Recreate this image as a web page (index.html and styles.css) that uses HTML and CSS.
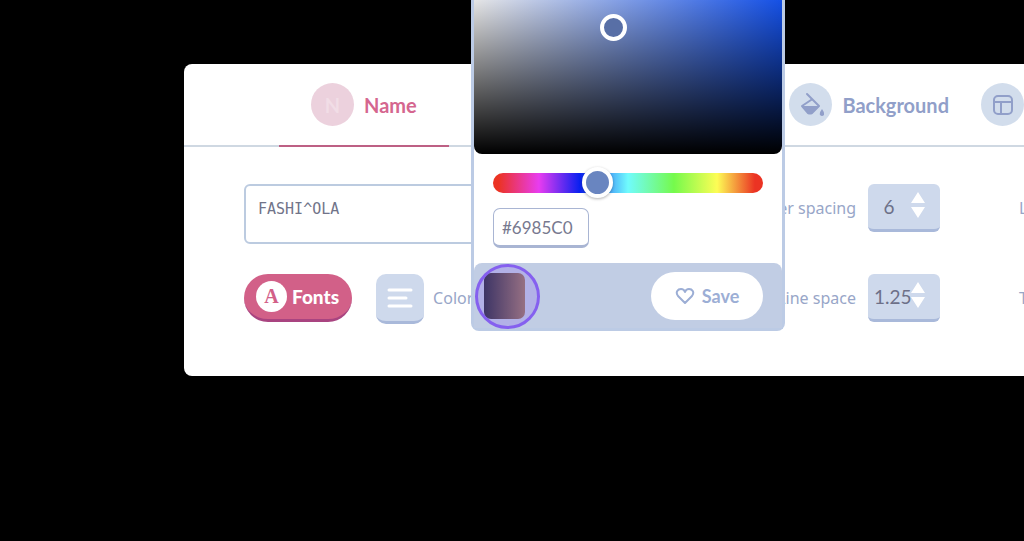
FILE: index.html
```
<!DOCTYPE html>
<html lang="en">
<head>
    <meta charset="utf-8">
    <title>Text Editor</title>
    <link rel="stylesheet" href="styles.css">
</head>
<body>
    <main class="stage">
        <section class="panel">
            <nav class="tabs">
                <a class="tab active" href="#name">
                    <span class="tab-icon letter">N</span>
                    Name
                </a>
                <a class="tab background" href="#background">
                    <span class="tab-icon">
                        <svg width="26" height="26" viewBox="0 0 26 26">
                            <path d="M9 2l4 4q1 1 0 2l-9 6 6 7q2 1 4 0l7-7-8-8" fill="none" stroke="currentColor" stroke-width="2" stroke-linecap="round" stroke-linejoin="round"/>
                            <path d="M4 14h17l-7 7q-2 1-4 0z" fill="currentColor"/>
                            <path d="M24 17q3 4 2 6-2 2-4 0-1-2 2-6z" fill="currentColor"/>
                        </svg>
                    </span>
                    Background
                </a>
                <a class="tab" href="#layout" aria-label="Layout">
                    <span class="tab-icon">
                        <svg width="22" height="22" viewBox="0 0 22 22" fill="none" stroke="currentColor" stroke-width="2">
                            <rect x="2" y="2" width="18" height="18" rx="4"/>
                            <path d="M2 8h18M9 8v12"/>
                        </svg>
                    </span>
                </a>
            </nav>

            <form class="controls">
                <textarea class="name-text" aria-label="Name" spellcheck="false">FASHI^OLA</textarea>
                <label class="label" for="letter-spacing">Letter spacing</label>
                <div class="number">
                    <input id="letter-spacing" type="number" value="6">
                    <svg class="arrows" width="14" height="28" viewBox="0 0 14 28" fill="#fff"><path d="M7 1l7 11H0zM0 16h14L7 27z"/></svg>
                </div>
                <span class="label next">L</span>

                <div class="text-tools">
                    <button type="button" class="fonts"><span class="fonts-icon">A</span>Fonts</button>
                    <button type="button" class="align" aria-label="Align">
                        <svg width="26" height="20" viewBox="0 0 26 20" fill="none" stroke="#fff" stroke-width="3" stroke-linecap="round"><path d="M2 2h22M2 10h17M2 18h22"/></svg>
                    </button>
                    <span class="label">Color</span>
                </div>
                <label class="label" for="line-space">Line space</label>
                <div class="number">
                    <input id="line-space" type="number" step="0.05" value="1.25">
                    <svg class="arrows" width="14" height="28" viewBox="0 0 14 28" fill="#fff"><path d="M7 1l7 11H0zM0 16h14L7 27z"/></svg>
                </div>
                <span class="label next">T</span>
            </form>
        </section>

        <!-- Color picker opens over the panel -->
        <aside class="picker">
            <div class="shade"><span class="shade-handle"></span></div>
            <div class="picker-body">
                <input class="hue" type="range" min="0" max="1000" value="374" aria-label="Hue">
                <input class="hex" type="text" value="#6985C0" aria-label="Hex color">
            </div>
            <div class="picker-footer">
                <button type="button" class="swatch" aria-label="Saved color"></button>
                <button type="button" class="save">
                    <svg width="20" height="18" viewBox="0 0 20 18" fill="none" stroke="currentColor" stroke-width="2" stroke-linejoin="round"><path d="M10 16L3 9C0 5 3 2 6 2q3 0 4 3 1-3 4-3c3 0 6 3 3 7z"/></svg>
                    Save
                </button>
            </div>
        </aside>
    </main>
</body>
</html>
```
FILE: styles.css
```
* { box-sizing: border-box; }
body { margin: 0; background: #000; font-family: Lato, sans-serif; overflow: hidden; }
button, input, textarea { font-family: inherit; margin: 0; }
button { border: none; cursor: pointer; }

.stage { position: relative; min-height: 100vh; padding: 64px 0 0 184px; }
.panel { background: #fff; border-radius: 8px 0 0 8px; padding-bottom: 54px; overflow: hidden; }

/* Tabs */
.tabs { display: flex; justify-content: flex-end; padding-left: 95px; border-bottom: 2px solid #cfd8e2; }
.tab { display: flex; flex-shrink: 0; align-items: center; gap: 10px; height: 81px; color: #919fc9; font-size: 20px; font-weight: bold; text-decoration: none; }
.tab.active { margin-right: auto; margin-bottom: -2px; height: 83px; padding: 0 32px; border-bottom: 2px solid #bd6084; color: #d5668f; }
.tab.background { margin-right: 32px; }
.tab-icon { display: flex; align-items: center; justify-content: center; width: 43px; height: 43px; border-radius: 50%; background: #d2ddec; }
.tab-icon.letter { background: #ecd1dd; color: #f1dde6; }

/* Controls */
.controls { display: grid; grid-template-columns: minmax(0, 1fr) auto 72px 72px; column-gap: 12px; row-gap: 42px; align-items: start; padding: 37px 0 0 60px; }
.label { align-self: center; color: #98a6c8; font-family: "Noto Sans", sans-serif; font-size: 16px; text-align: right; white-space: nowrap; }
.label.next { justify-self: end; width: 5px; text-align: left; }
.name-text { height: 60px; margin-bottom: -12px; padding: 14px 12px; border: 2px solid #bccbe0; border-radius: 6px; resize: none; outline: none; background: #fff; color: #717489; font-family: "DejaVu Sans Mono", monospace; font-size: 15px; }
.number { position: relative; height: 48px; }
.number input { width: 100%; height: 100%; padding: 0 30px 0 0; border: none; border-bottom: 3px solid #a9b9da; border-radius: 6px; background: #ced9ec; color: #6d7088; font-size: 19px; text-align: center; appearance: textfield; }
.number input::-webkit-inner-spin-button { appearance: none; margin: 0; }
#line-space { padding: 0 0 0 6px; text-align: left; }
.arrows { position: absolute; top: 7px; right: 15px; }

.text-tools { display: flex; align-items: flex-start; height: 48px; }
.text-tools .label { margin-left: 9px; }
.fonts { display: flex; align-items: center; gap: 5px; height: 48px; padding: 0 13px 0 12px; border-bottom: 3px solid #a94480; border-radius: 24px; background: #d26088; color: #fff; font-size: 19px; font-weight: 900; }
.fonts-icon { width: 31px; height: 31px; border-radius: 50%; background: #fff; color: #d26088; font-family: "Liberation Serif", serif; font-size: 20px; font-weight: bold; line-height: 31px; }
.align { display: flex; align-items: center; justify-content: center; width: 48px; height: 50px; margin-left: 24px; padding: 0; border-bottom: 3px solid #a9b9da; border-radius: 10px; background: #ced9ec; }

/* Color picker */
.picker { position: absolute; top: 0; left: 471px; width: 314px; border: 3px solid #bccbe5; border-top: none; border-radius: 0 0 8px 8px; background: #fff; }
.shade { position: relative; height: 154px; border-radius: 0 0 8px 8px; background: linear-gradient(to top, #000, rgba(0, 0, 0, 0.1)), linear-gradient(to right, #fff, #1759ff); }
.shade-handle { position: absolute; top: 14px; left: 126px; width: 27px; height: 27px; border: 4px solid #fff; border-radius: 50%; background: #586fa6; }
.picker-body { display: flex; flex-direction: column; align-items: flex-start; gap: 10px; padding: 13px 19px 15px; }
.hue { width: 100%; height: 31px; appearance: none; background: none; }
.hue::-webkit-slider-runnable-track { height: 20px; border-radius: 10px; background: linear-gradient(to right, #eb3323 2%, #e83cf0 17%, #0a20f0 32%, #70fbfd 50%, #75fa4c 67%, #fdfd55 83%, #eb3323 97%); }
.hue::-webkit-slider-thumb { appearance: none; box-sizing: border-box; width: 31px; height: 31px; margin-top: -6px; border: 4px solid #fff; border-radius: 50%; background: #6985c0; box-shadow: 0 1px 3px rgba(0, 0, 0, 0.3); }
.hex { width: 96px; height: 40px; padding: 0 8px; border: 1px solid #a9b5d3; border-bottom-width: 3px; border-radius: 7px; background: #fff; color: #77798f; font-size: 17px; }
.picker-footer { display: flex; align-items: center; justify-content: space-between; height: 65px; padding: 0 19px 0 10px; border-radius: 8px 8px 0 0; background: #c1cde4; }
.swatch { position: relative; width: 41px; height: 46px; border-radius: 7px; background: linear-gradient(to right, #252738, #9b755f); }
.swatch::after { content: ""; position: absolute; top: -9px; left: -9px; box-sizing: border-box; width: 65px; height: 65px; border: 3px solid #8560ef; border-radius: 50%; background: rgba(134, 96, 239, 0.25); }
.save { display: flex; align-items: center; justify-content: center; gap: 7px; width: 112px; height: 48px; border-radius: 24px; background: #fff; color: #9caed5; font-size: 18px; font-weight: bold; }
```
